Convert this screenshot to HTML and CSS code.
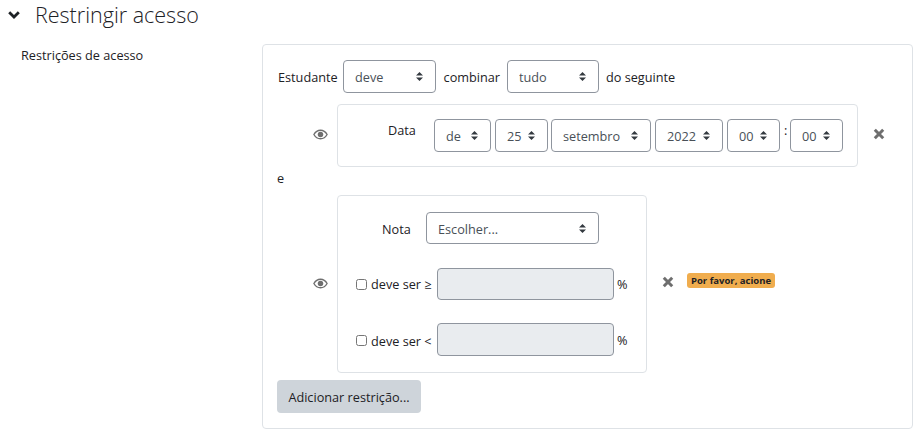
FILE: index.html
```html
<!DOCTYPE html>
<html lang="pt-BR">
<head>
    <meta charset="UTF-8">
    <title>Restringir acesso</title>
    <link rel="stylesheet" href="styles.css">
</head>
<body>
    <h3 class="section-title">
        <svg class="chevron" viewBox="0 0 12 8" width="12" height="8"><path d="M1.200 1.200 6 6l4.800-4.800" fill="none" stroke="#1d2125" stroke-width="2.800"/></svg>
        <span>Restringir acesso</span>
    </h3>

    <div class="form-row">
        <div class="form-label">Restrições de acesso</div>
        <div class="card">
            <div class="top-row">
                <span class="lbl-student">Estudante</span>
                <select class="sel w-deve"><option>deve</option></select>
                <span class="lbl-combine">combinar</span>
                <select class="sel w-tudo"><option>tudo</option></select>
                <span>do seguinte</span>
            </div>

            <div class="rule rule-date">
                <div class="eye-col">
                    <svg class="eye" viewBox="0 0 16 12" width="15" height="11"><path d="M.8 6C2.500 3 5 1.400 8 1.400S13.500 3 15.200 6c-1.700 3-4.200 4.600-7.200 4.600S2.500 9 .8 6Z" fill="none" stroke="#6e6e6e" stroke-width="1.500"/><circle cx="8" cy="6" r="3" fill="#6e6e6e"/></svg>
                </div>
                <div class="box box-date">
                    <span class="date-label">Data</span>
                    <select class="sel w-de"><option>de</option></select>
                    <select class="sel w-day"><option>25</option></select>
                    <select class="sel w-month"><option>setembro</option></select>
                    <select class="sel w-year"><option>2022</option></select>
                    <select class="sel w-day"><option>00</option></select>
                    <span class="colon">:</span>
                    <select class="sel w-day"><option>00</option></select>
                </div>
                <svg class="cross" viewBox="0 0 12 12" width="12" height="12"><path d="M1.800 1.800l8.400 8.400M10.200 1.800l-8.400 8.400" stroke="#6e6e6e" stroke-width="3"/></svg>
            </div>

            <div class="joiner">e</div>

            <div class="rule rule-grade">
                <div class="eye-col">
                    <svg class="eye" viewBox="0 0 16 12" width="15" height="11"><path d="M.8 6C2.500 3 5 1.400 8 1.400S13.500 3 15.200 6c-1.700 3-4.200 4.600-7.200 4.600S2.500 9 .8 6Z" fill="none" stroke="#6e6e6e" stroke-width="1.500"/><circle cx="8" cy="6" r="3" fill="#6e6e6e"/></svg>
                </div>
                <div class="box box-grade">
                    <div class="grade-row">
                        <span class="grade-label">Nota</span>
                        <select class="sel w-grade"><option>Escolher...</option></select>
                    </div>
                    <div class="limit-row">
                        <label class="check"><input type="checkbox"> deve ser ≥</label>
                        <input class="num" type="text" disabled>
                        <span>%</span>
                    </div>
                    <div class="limit-row second">
                        <label class="check"><input type="checkbox"> deve ser &lt;</label>
                        <input class="num" type="text" disabled>
                        <span>%</span>
                    </div>
                </div>
                <svg class="cross" viewBox="0 0 12 12" width="12" height="12"><path d="M1.800 1.800l8.400 8.400M10.200 1.800l-8.400 8.400" stroke="#6e6e6e" stroke-width="3"/></svg>
                <span class="badge">Por favor, acione</span>
            </div>

            <button class="add-btn" type="button">Adicionar restrição...</button>
        </div>
    </div>
</body>
</html>
```

FILE: styles.css
```css
body {
    margin: 0;
    font-family: "Open Sans", "Noto Sans", sans-serif;
    font-size: 12.700px;
    color: #1d2125;
    background-color: white;
}

.section-title {
    display: flex;
    align-items: center;
    height: 29px;
    margin: 0;
    padding-left: 8px;
    font-size: 21.500px;
    font-weight: 300;
}

.chevron {
    margin-right: 15px;
}

.form-row {
    display: flex;
    margin-top: 15px;
}

.form-label {
    width: 262px;
    padding: 2px 0 0 21px;
    box-sizing: border-box;
    flex: none;
}

.card {
    width: 651px;
    height: 385px;
    box-sizing: border-box;
    padding: 15px 14px;
    border: 1px solid #dee2e6;
    border-radius: 4px;
}

.top-row {
    display: flex;
    align-items: center;
    gap: 7px;
}

.lbl-student {
    width: 58px;
    margin-left: 1px;
}

.lbl-combine {
    width: 57px;
    text-align: right;
}

.sel {
    height: 33px;
    box-sizing: border-box;
    padding: 0 24px 0 11px;
    border: 1px solid #8f959e;
    border-radius: 4px;
    background-color: white;
    background-image: url("data:image/svg+xml,%3Csvg xmlns='http://www.w3.org/2000/svg' width='7' height='9'%3E%3Cpath d='M3.500 0 7 3.400H0ZM3.500 9 0 5.600H7Z' fill='%23343a40'/%3E%3C/svg%3E");
    background-repeat: no-repeat;
    background-position: right 12px center;
    font: inherit;
    color: #495057;
    appearance: none;
}

.w-deve { width: 93px; }
.w-tudo { width: 92px; }
.w-de { width: 57px; }
.w-day { width: 53px; }
.w-month { width: 100px; margin-left: -1px; }
.w-year { width: 68px; }
.w-grade { width: 173px; height: 32px; padding-top: 1px; }

.rule {
    display: flex;
}

.rule-date {
    margin-top: 11px;
}

.eye-col {
    display: flex;
    align-items: center;
    justify-content: flex-end;
    width: 60px;
    flex: none;
    box-sizing: border-box;
    padding-right: 9px;
}

.eye {
    margin-top: -2px;
}

.box {
    box-sizing: border-box;
    border: 1px solid #dee2e6;
    border-radius: 4px;
}

.box-date {
    display: flex;
    gap: 4px;
    align-items: flex-start;
    width: 521px;
    height: 63px;
    padding: 14px 0 0 50px;
}

.date-label {
    width: 42px;
    line-height: 22px;
}

.colon {
    width: 2px;
    line-height: 22px;
}

.cross {
    margin: 24px 0 0 15px;
}

.joiner {
    margin-top: 3px;
    height: 25px;
    line-height: 17px;
}

.box-grade {
    width: 310px;
    height: 178px;
    padding: 16px 0 0 18px;
}

.grade-row {
    display: flex;
    align-items: center;
    padding-left: 26px;
    gap: 14px;
}

.grade-label {
    width: 30px;
    margin-top: 2px;
}

.limit-row {
    display: flex;
    align-items: center;
    margin-top: 24px;
    gap: 3px;
}

.limit-row.second {
    margin-top: 23px;
}

.limit-row.second .num {
    height: 33px;
}

.limit-row.second .check {
    padding-top: 2px;
}

.check {
    display: flex;
    align-items: center;
    gap: 4px;
    width: 78px;
    white-space: nowrap;
}

.check input {
    width: 11px;
    height: 11px;
    margin: 0;
}

.num {
    width: 177px;
    height: 32px;
    box-sizing: border-box;
    padding: 0;
    border: 1px solid #8f959e;
    border-radius: 4px;
    background-color: #e9ecef;
}

.rule-grade .cross {
    margin: 81px 0 0 15px;
}

.badge {
    align-self: flex-start;
    margin: 78px 0 0 13px;
    padding: 0 4px;
    height: 15px;
    line-height: 15px;
    font-size: 9.500px;
    font-weight: 700;
    background-color: #f0ad4e;
    border-radius: 3px;
}

.add-btn {
    display: block;
    width: 144px;
    height: 33px;
    margin-top: 7px;
    padding: 0;
    border: none;
    border-radius: 4px;
    background-color: #ced4da;
    color: #1d2125;
    font: inherit;
    cursor: pointer;
}
```
